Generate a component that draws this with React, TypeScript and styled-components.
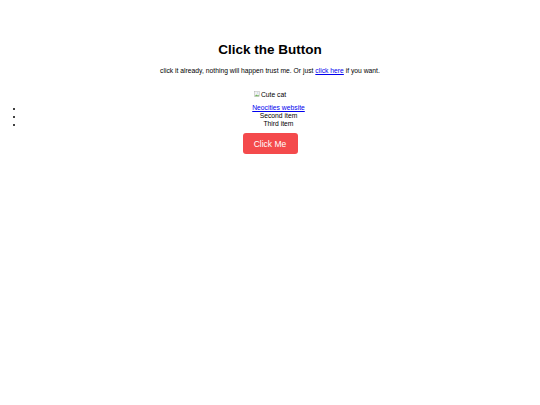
import React from 'react';
import styled, { createGlobalStyle } from 'styled-components';

const GlobalStyle = createGlobalStyle`
  html, body {
    margin: 0;
    padding: 0;
    background: #ffffff;
  }
  body {
    font-family: 'Liberation Sans', Arial, sans-serif;
    font-size: 6.75px;
    color: #000000;
  }
`;

const Page = styled.main`
  text-align: center;
  padding: 42px 3px 0;
`;

const Title = styled.h1`
  font-size: 13.5px;
  font-weight: bold;
  margin: 0 0 9px;
  line-height: 16px;
`;

const Intro = styled.p`
  margin: 0 0 15px;
  line-height: 8px;
`;

const Link = styled.a`
  color: #0000ee;
  text-decoration: underline;
`;

const Figure = styled.div`
  display: flex;
  justify-content: center;
  align-items: center;
  height: 8px;
  margin-bottom: 6px;
`;

const BrokenIcon = styled.svg`
  width: 6px;
  height: 6px;
  margin-right: 1px;
`;

const List = styled.ul`
  margin: 0 0 5px;
  padding-left: 17px;
  list-style: none;
  line-height: 8px;
`;

const Item = styled.li`
  position: relative;
  font-size: 6.75px;
  &::before {
    content: '';
    position: absolute;
    left: -7px;
    top: 4px;
    width: 2px;
    height: 2px;
    border-radius: 50%;
    background: #000000;
  }
`;

const Button = styled.button`
  font-family: 'Liberation Sans', Arial, sans-serif;
  font-size: 8.5px;
  color: #ffffff;
  background: #f44a4c;
  border: none;
  border-radius: 3px;
  width: 55px;
  height: 21px;
  padding: 0;
  cursor: pointer;
`;

const App: React.FC = () => (
  <>
    <GlobalStyle />
    <Page>
      <Title>Click the Button</Title>
      <Intro>
        click it already, nothing will happen trust me. Or just{' '}
        <Link href="#">click here</Link> if you want.
      </Intro>
      <Figure>
        <BrokenIcon viewBox="0 0 16 16">
          <rect x="1" y="2" width="13" height="12" fill="#f2f2f2" stroke="#9a9a9a" />
          <path d="M2 14l4-5 3 3 2-2 3 4z" fill="#6fb35a" />
          <circle cx="10" cy="5" r="1.3" fill="#5aa0e0" />
        </BrokenIcon>
        <span>Cute cat</span>
      </Figure>
      <List>
        <Item>
          <Link href="#">Neocities website</Link>
        </Item>
        <Item>Second item</Item>
        <Item>Third item</Item>
      </List>
      <Button>Click Me</Button>
    </Page>
  </>
);

export default App;
